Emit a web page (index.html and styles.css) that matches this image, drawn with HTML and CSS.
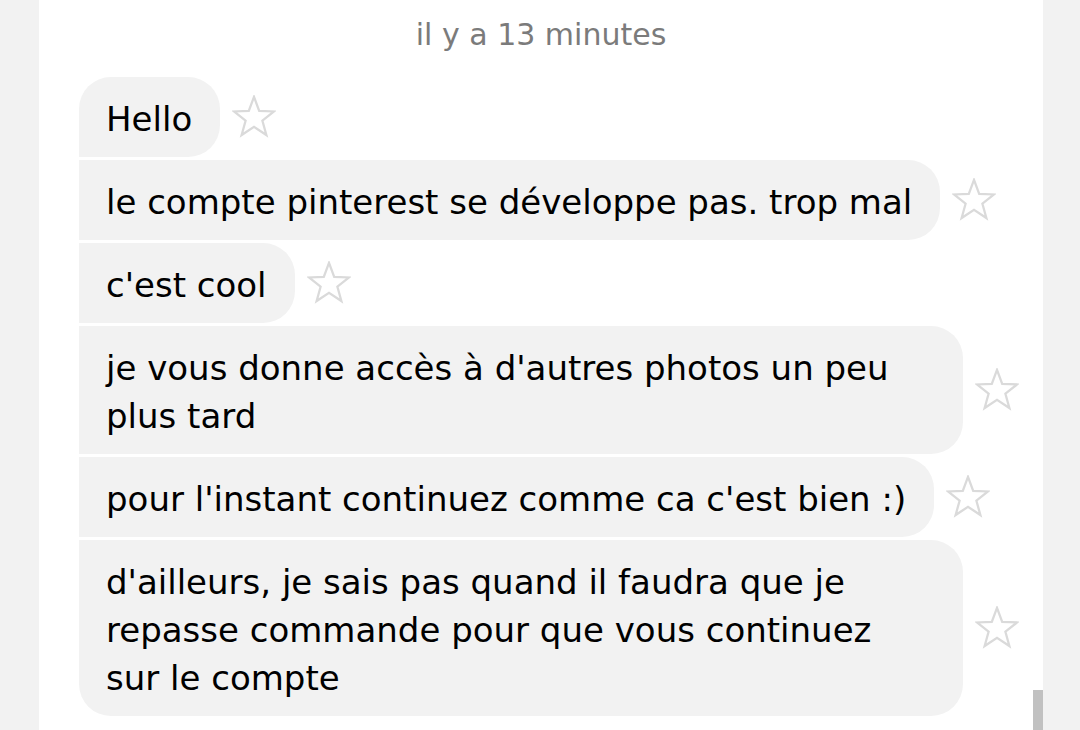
FILE: index.html
```html
<!DOCTYPE html>
<html lang="fr">
<head>
  <meta charset="UTF-8">
  <meta name="viewport" content="width=device-width, initial-scale=1.0">
  <title>Messages</title>
  <link rel="stylesheet" href="styles.css">
</head>
<body>
  <div class="chat">
    <div class="time">il y a 13 minutes</div>

    <div class="messages">
      <div class="msg">
        <div class="bubble first">Hello</div>
        <svg class="star" viewBox="-1 -1 46 44"><polygon points="22,0 27.43,14.52 42.92,15.2 30.79,24.86 34.93,39.8 22,31.24 9.07,39.8 13.21,24.86 1.08,15.2 16.57,14.52"/></svg>
      </div>
      <div class="msg">
        <div class="bubble">le compte pinterest se développe pas. trop mal</div>
        <svg class="star" viewBox="-1 -1 46 44"><polygon points="22,0 27.43,14.52 42.92,15.2 30.79,24.86 34.93,39.8 22,31.24 9.07,39.8 13.21,24.86 1.08,15.2 16.57,14.52"/></svg>
      </div>
      <div class="msg">
        <div class="bubble">c'est cool</div>
        <svg class="star" viewBox="-1 -1 46 44"><polygon points="22,0 27.43,14.52 42.92,15.2 30.79,24.86 34.93,39.8 22,31.24 9.07,39.8 13.21,24.86 1.08,15.2 16.57,14.52"/></svg>
      </div>
      <div class="msg">
        <div class="bubble">je vous donne accès à d'autres photos un peu plus tard</div>
        <svg class="star" viewBox="-1 -1 46 44"><polygon points="22,0 27.43,14.52 42.92,15.2 30.79,24.86 34.93,39.8 22,31.24 9.07,39.8 13.21,24.86 1.08,15.2 16.57,14.52"/></svg>
      </div>
      <div class="msg">
        <div class="bubble">pour l'instant continuez comme ca c'est bien :)</div>
        <svg class="star" viewBox="-1 -1 46 44"><polygon points="22,0 27.43,14.52 42.92,15.2 30.79,24.86 34.93,39.8 22,31.24 9.07,39.8 13.21,24.86 1.08,15.2 16.57,14.52"/></svg>
      </div>
      <div class="msg">
        <div class="bubble last">d'ailleurs, je sais pas quand il faudra que je repasse commande pour que vous continuez<br>sur le compte</div>
        <svg class="star" viewBox="-1 -1 46 44"><polygon points="22,0 27.43,14.52 42.92,15.2 30.79,24.86 34.93,39.8 22,31.24 9.07,39.8 13.21,24.86 1.08,15.2 16.57,14.52"/></svg>
      </div>
    </div>

    <div class="scroll-thumb"></div>
  </div>
</body>
</html>
```
FILE: styles.css
```css
body {
  margin: 0;
  background-color: #f2f2f2;
  font-family: 'DejaVu Sans', sans-serif;
  color: #000;
}
.chat {
  position: relative;
  width: 1004px;
  min-height: 100vh;
  margin-left: 39px;
  background-color: #fff;
  box-sizing: border-box;
  padding-bottom: 14px;
}
.time {
  padding-top: 14px;
  margin-bottom: 21px;
  line-height: 42px;
  font-size: 30px;
  text-align: center;
  color: #7b7b7b;
}
.messages {
  display: flex;
  flex-direction: column;
  gap: 3px;
  padding-left: 40px;
}
.msg {
  display: flex;
  align-items: center;
  gap: 12px;
}
.bubble {
  max-width: 884px;
  box-sizing: border-box;
  padding: 18px 28px 14px 27px;
  background-color: #f2f2f2;
  border-radius: 0 32px 32px 0;
  font-size: 34px;
  line-height: 48px;
}
.bubble.first {
  border-top-left-radius: 32px;
}
.bubble.last {
  border-bottom-left-radius: 32px;
}
.star {
  flex-shrink: 0;
  width: 44px;
  height: 44px;
  fill: none;
  stroke: #dadada;
  stroke-width: 2.4;
}
.scroll-thumb {
  position: absolute;
  right: 0;
  bottom: 0;
  width: 10px;
  height: 40px;
  background-color: #c1c1c1;
}
```
